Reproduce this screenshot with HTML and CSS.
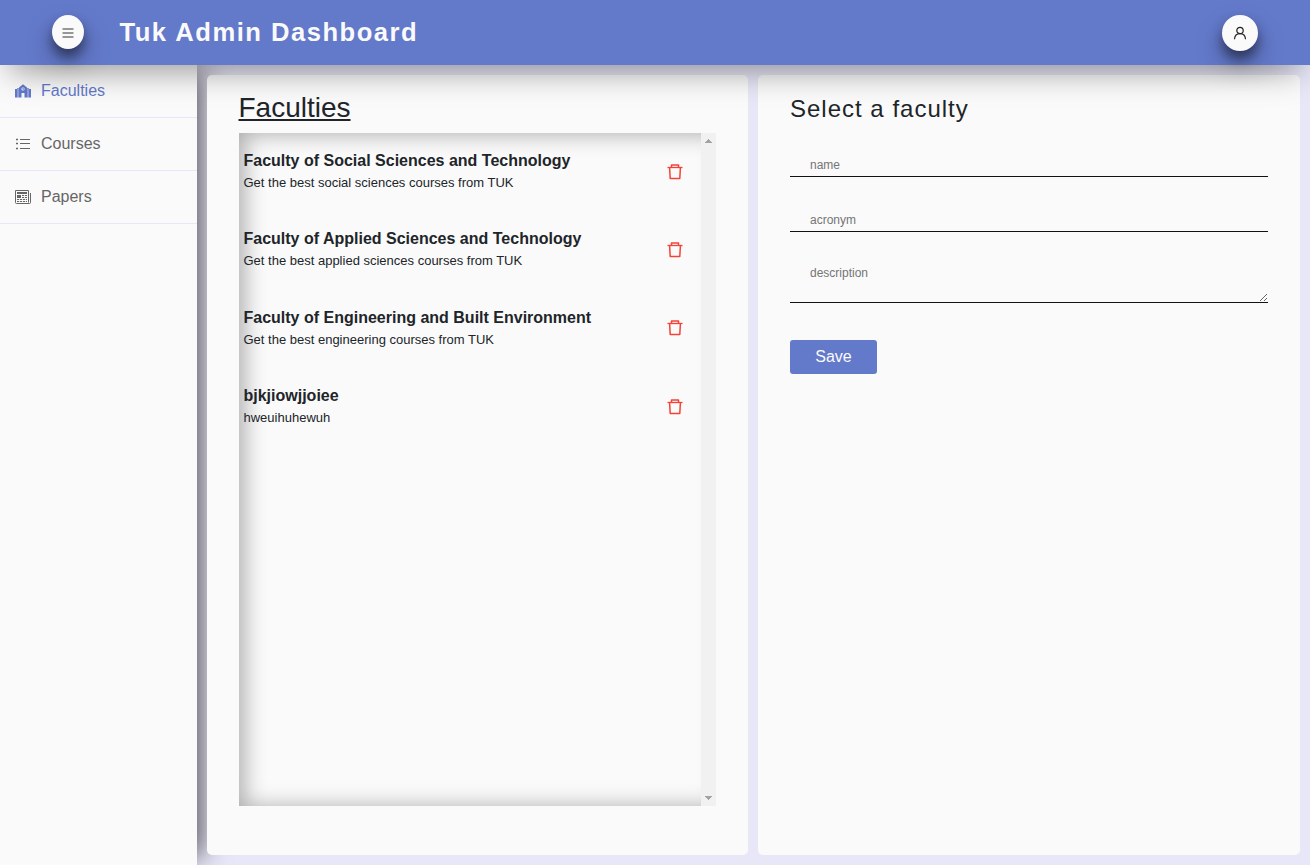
FILE: index.html
```html
<!DOCTYPE html>
<html lang="en">
<head>
<meta charset="utf-8">
<title>Tuk Admin Dashboard</title>
<link rel="stylesheet" href="styles.css">
</head>
<body>
<svg class="defs" aria-hidden="true">
  <symbol id="trash" viewBox="0 0 16 18"><path d="M4.500 4V2h7v2M2.600 4.500l.6 11h9.600l.6-11" fill="none" stroke="currentColor" stroke-width="1.500" stroke-linejoin="round"/><path d="M.5 4.500h15" stroke="currentColor" stroke-width="1.300"/></symbol>
</svg>
<header class="topbar">
  <button class="round menu" aria-label="Menu"><svg width="14" height="14" viewBox="0 0 14 14"><path d="M1.500 3h11M1.500 7h11M1.500 11h11" stroke="#777" stroke-width="1.500"/></svg></button>
  <h1>Tuk Admin Dashboard</h1>
  <button class="round user" aria-label="Account"><svg width="14" height="16" viewBox="0 0 14 16" fill="none" stroke="#222" stroke-width="1.200"><circle cx="7" cy="5.500" r="3.200"/><path d="M1.500 14.200C1.700 10.700 4 8.700 7 8.700s5.300 2 5.500 5.500"/></svg></button>
</header>
<div class="shell">
  <nav class="sidebar">
    <a class="active"><svg width="16" height="16" viewBox="0 0 16 16" fill="currentColor"><path d="M0 6h2v8.500H0zM14 6h2v8.500h-2zM4 4.500 8 1.300l4 3.200v10H9.500V10h-3v4.500H4z"/><path d="M2 5h2v9.500H2zM12 5h2v9.500h-2z" opacity=".7"/><circle cx="8" cy="6" r="1.700" fill="#d5daf0"/><path d="M8 4.800v1.400h1" fill="none" stroke="currentColor" stroke-width=".7"/></svg><span>Faculties</span></a>
    <a><svg width="16" height="16" viewBox="0 0 16 16" fill="none" stroke="currentColor"><path d="M5 3.500h10M5 7.500h10M5 12.500h10"/><path d="M1 3.500h2M1 7.500h2M1 12.500h2" stroke-width="1.300"/></svg><span>Courses</span></a>
    <a><svg width="16" height="16" viewBox="0 0 16 16" fill="none" stroke="currentColor"><path d="M13.500 13.500V1.500H.5v12q0 1 1 1h13q1 0 1-1V4"/><path d="M2 4h10" stroke-width="2"/><path d="M2 7.500h4" stroke-width="3"/><path d="M7 6.500h5M7 8.500h5M2 10.500h10M2 12.500h10" stroke-dasharray="2.200 .8"/></svg><span>Papers</span></a>
  </nav>
  <main class="panels">
    <section class="card">
      <h2>Faculties</h2>
      <div class="list">
        <div class="items">
          <article><div><h3>Faculty of Social Sciences and Technology</h3><p>Get the best social sciences courses from TUK</p></div><svg><use href="#trash"/></svg></article>
          <article><div><h3>Faculty of Applied Sciences and Technology</h3><p>Get the best applied sciences courses from TUK</p></div><svg><use href="#trash"/></svg></article>
          <article><div><h3>Faculty of Engineering and Built Environment</h3><p>Get the best engineering courses from TUK</p></div><svg><use href="#trash"/></svg></article>
          <article><div><h3>bjkjiowjjoiee</h3><p>hweuihuhewuh</p></div><svg><use href="#trash"/></svg></article>
        </div>
        <div class="scroll"><svg width="15" height="15" shape-rendering="crispEdges"><path d="M4 10h7L7.500 6z"/></svg><svg width="15" height="15" shape-rendering="crispEdges"><path d="M4 5h7L7.500 9z"/></svg></div>
      </div>
    </section>
    <section class="card editor">
      <h2>Select a faculty</h2>
      <input placeholder="name">
      <input placeholder="acronym">
      <textarea placeholder="description"></textarea>
      <button class="save">Save</button>
    </section>
  </main>
</div>
</body>
</html>
```

FILE: styles.css
```css
* { box-sizing: border-box; }
body { margin: 0; height: 865px; overflow: hidden; background: #e8e7f7; color: #212529; font-family: "Liberation Sans", Arial, sans-serif; font-size: 16px; }
h1, h2, h3, p { margin: 0; }
button { border: 0; padding: 0; font-family: inherit; }
.defs { display: none; }
.topbar { position: relative; z-index: 3; display: flex; align-items: flex-start; height: 65px; padding: 15px 52px; background: #6379ca; box-shadow: rgba(0,0,0,.4) 0 16px 32px -10px; }
.topbar h1 { flex: 1; margin-left: 35.500px; font-size: 25.600px; line-height: 34px; letter-spacing: 1.500px; color: #fafafa; }
.round { display: flex; align-items: center; justify-content: center; border-radius: 50%; background: #fafafa; box-shadow: rgba(0,0,0,.25) 0 14px 28px, rgba(0,0,0,.45) 0 8px 12px; }
.menu { width: 32px; height: 34px; padding-top: 2px; }
.user { width: 36px; height: 36px; }
.shell { display: flex; height: 800px; }
.sidebar { width: 197px; background: #fafafa; box-shadow: rgba(0,0,0,.64) 13px 0 26px -8px; }
.sidebar a { display: flex; align-items: center; gap: 10px; height: 53px; padding: 0 15px; border-bottom: 1px solid #e8e7f7; color: #666; }
.sidebar a.active { color: #6379ca; }
.panels { flex: 1; display: grid; grid-template-columns: 541px 542px; gap: 10px; padding: 10px; }
.card { padding: 16px 32px 16px 31.500px; border-radius: 5px; background: #fafafa; }
.card h2 { font-size: 28px; font-weight: 400; line-height: 33px; text-decoration: underline; }
.list { display: flex; width: 477.500px; height: 673px; margin-top: 9px; }
.items { flex: 1; margin-right: -15px; box-shadow: inset 5px 1px 22px rgba(0,0,0,.32); }
.items article { display: flex; justify-content: space-between; height: 78.400px; padding: 17px 33px 0 5px; }
.items h3 { font-size: 16px; line-height: 22px; }
.items p { font-size: 13px; line-height: 22px; }
.items svg { width: 16px; height: 18px; margin-top: 12.500px; color: #f44336; }
.scroll { position: relative; width: 15px; display: flex; flex-direction: column; justify-content: space-between; background: #f1f1f1; fill: #a3a3a3; }
.editor { display: flex; flex-direction: column; align-items: flex-start; padding-left: 32px; }
.editor h2 { margin-top: 1px; font-size: 24px; letter-spacing: 1px; text-decoration: none; }
.editor input, .editor textarea { display: block; width: 478px; border: 0; border-bottom: 1px solid #111; padding: 5px 20px; background: transparent; font: 12px "Liberation Sans", Arial, sans-serif; }
.editor input { height: 25px; margin-top: 27px; padding: 6px 20px 4px; }
.editor input + input { margin-top: 30px; }
.editor textarea { height: 42px; margin-top: 29px; }
.save { width: 87px; height: 34px; margin-top: 37px; border-radius: 3px; background: #6379ca; color: #fafafa; font-size: 16px; }
```
